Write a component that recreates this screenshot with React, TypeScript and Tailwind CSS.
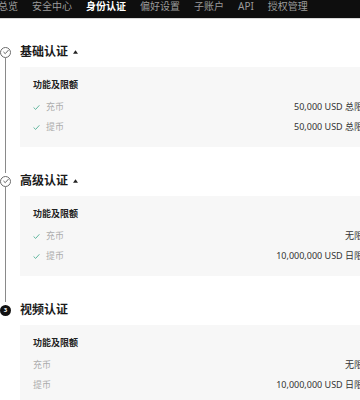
import React from "react";

interface Limit {
  name: string;
  value: string;
}

interface Level {
  title: string;
  done: boolean;
  step: number;
  arrow: boolean;
  rows: Limit[];
}

const navItems = ["总览", "安全中心", "身份认证", "偏好设置", "子账户", "API", "授权管理"];

const levels: Level[] = [
  {
    title: "基础认证",
    done: true,
    step: 1,
    arrow: true,
    rows: [
      { name: "充币", value: "50,000 USD 总限额" },
      { name: "提币", value: "50,000 USD 总限额" },
    ],
  },
  {
    title: "高级认证",
    done: true,
    step: 2,
    arrow: true,
    rows: [
      { name: "充币", value: "无限额" },
      { name: "提币", value: "10,000,000 USD 日限额" },
    ],
  },
  {
    title: "视频认证",
    done: false,
    step: 3,
    arrow: false,
    rows: [
      { name: "充币", value: "无限额" },
      { name: "提币", value: "10,000,000 USD 日限额" },
    ],
  },
];

function Check({ className }: { className: string }) {
  return (
    <svg viewBox="0 0 8 8" className={className} fill="none" stroke="currentColor" strokeWidth="1.1" strokeLinecap="round" strokeLinejoin="round">
      <path d="M1 4.3 L3 6.2 L7 1.8" />
    </svg>
  );
}

function StepDot({ level }: { level: Level }) {
  if (level.done) {
    return (
      <div className="w-[11px] h-[11px] mt-[2.5px] rounded-full border border-[#6b6b6b] bg-white flex items-center justify-center shrink-0">
        <Check className="w-[6px] h-[6px] text-[#444]" />
      </div>
    );
  }
  return (
    <div className="w-[11px] h-[11px] mt-[2.5px] rounded-full bg-[#111] text-white text-[6px] leading-none font-bold flex items-center justify-center shrink-0">
      {level.step}
    </div>
  );
}

export default function App() {
  return (
    <div className="w-[360px] h-[400px] overflow-hidden bg-white font-['Noto_Sans','Noto_Sans_CJK_SC',sans-serif]">
      <div className="w-[396px]">
        {/* Top nav */}
        <div className="h-[19px] bg-[#0e0e0e] border-b border-[#d9d9d9] flex gap-[14px] pl-[0px] -ml-[2px]">
          {navItems.map((item) => (
            <span
              key={item}
              className={
                item === "身份认证"
                  ? "text-[10px] leading-[12px] text-white font-bold whitespace-nowrap"
                  : "text-[10px] leading-[12px] text-[#9b9b9b] whitespace-nowrap"
              }
            >
              {item}
            </span>
          ))}
        </div>

        {/* Steps */}
        <div className="pt-[25px] pr-[12px]">
          {levels.map((level, i) => (
            <div key={level.title} className="flex">
              <div className="w-[11px] flex flex-col items-center shrink-0">
                <StepDot level={level} />
                {i < levels.length - 1 && <div className="w-px flex-1 bg-[#8a8a8a]" />}
              </div>
              <div className={i < levels.length - 1 ? "flex-1 ml-[9px] pb-[26px]" : "flex-1 ml-[9px]"}>
                <div className="h-[16px] flex items-center">
                  <span className="text-[12px] leading-[16px] font-semibold text-[#1a1a1a]">{level.title}</span>
                  {level.arrow && (
                    <svg viewBox="0 0 6 4" className="w-[5px] h-[4px] ml-[5px] text-[#222]" fill="currentColor">
                      <path d="M3 0 L6 4 L0 4 Z" />
                    </svg>
                  )}
                </div>
                <div className="mt-[7px] h-[80px] bg-[#f7f7f7] pl-[13px] pr-[12px] pt-[10px]">
                  <div className="text-[9px] leading-[16px] font-semibold text-[#222]">功能及限额</div>
                  <div className="mt-[4px]">
                    {level.rows.map((row) => (
                      <div key={row.name} className="h-[20px] flex items-center justify-between">
                        <div className="flex items-center">
                          {level.done && <Check className="w-[7px] h-[7px] mr-[6px] text-[#5db59c]" />}
                          <span className="text-[9px] text-[#acacac]">{row.name}</span>
                        </div>
                        <span className="text-[9px] text-[#333] whitespace-nowrap">{row.value}</span>
                      </div>
                    ))}
                  </div>
                </div>
              </div>
            </div>
          ))}
        </div>
      </div>
    </div>
  );
}
